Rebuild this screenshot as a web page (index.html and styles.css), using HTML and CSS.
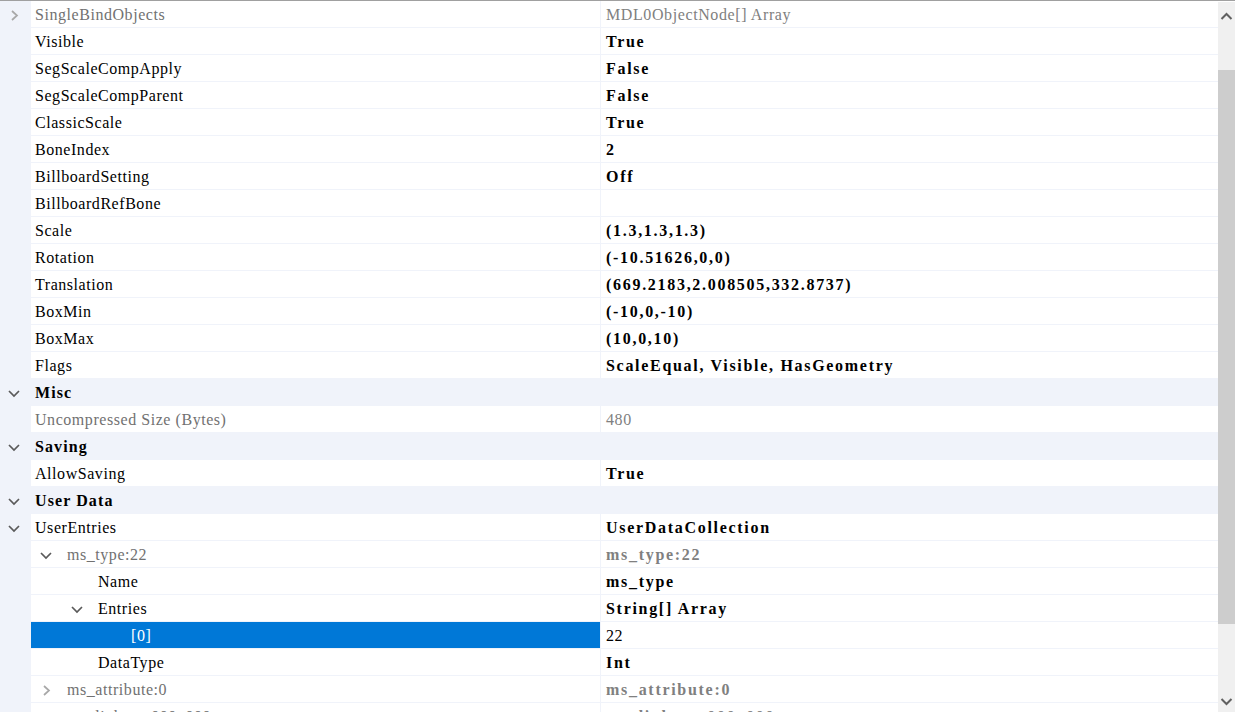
FILE: index.html
```html
<!DOCTYPE html>
<html>
<head>
<meta charset="utf-8">
<link rel="stylesheet" href="styles.css">
</head>
<body>
<div class="grid-view">
  <div class="list">
    <div class="row"><div class="gut"><svg class="tw" viewBox="0 0 14 14"><polyline class="cr" points="5,3 10,7.5 5,12"/></svg></div><div class="lab ro">SingleBindObjects</div><div class="val ro">MDL0ObjectNode[] Array</div></div>
    <div class="row"><div class="gut"></div><div class="lab">Visible</div><div class="val b">True</div></div>
    <div class="row"><div class="gut"></div><div class="lab">SegScaleCompApply</div><div class="val b">False</div></div>
    <div class="row"><div class="gut"></div><div class="lab">SegScaleCompParent</div><div class="val b">False</div></div>
    <div class="row"><div class="gut"></div><div class="lab">ClassicScale</div><div class="val b">True</div></div>
    <div class="row"><div class="gut"></div><div class="lab">BoneIndex</div><div class="val b">2</div></div>
    <div class="row"><div class="gut"></div><div class="lab">BillboardSetting</div><div class="val b">Off</div></div>
    <div class="row"><div class="gut"></div><div class="lab">BillboardRefBone</div><div class="val b"></div></div>
    <div class="row"><div class="gut"></div><div class="lab">Scale</div><div class="val b">(1.3,1.3,1.3)</div></div>
    <div class="row"><div class="gut"></div><div class="lab">Rotation</div><div class="val b">(-10.51626,0,0)</div></div>
    <div class="row"><div class="gut"></div><div class="lab">Translation</div><div class="val b">(669.2183,2.008505,332.8737)</div></div>
    <div class="row"><div class="gut"></div><div class="lab">BoxMin</div><div class="val b">(-10,0,-10)</div></div>
    <div class="row"><div class="gut"></div><div class="lab">BoxMax</div><div class="val b">(10,0,10)</div></div>
    <div class="row"><div class="gut"></div><div class="lab">Flags</div><div class="val b">ScaleEqual, Visible, HasGeometry</div></div>
    <div class="row cat"><div class="gut"><svg class="tw" viewBox="0 0 14 14"><polyline class="cd" points="2,5 7,10 12,5"/></svg></div><div class="catlab">Misc</div></div>
    <div class="row"><div class="gut"></div><div class="lab ro">Uncompressed Size (Bytes)</div><div class="val ro">480</div></div>
    <div class="row cat"><div class="gut"><svg class="tw" viewBox="0 0 14 14"><polyline class="cd" points="2,5 7,10 12,5"/></svg></div><div class="catlab">Saving</div></div>
    <div class="row"><div class="gut"></div><div class="lab">AllowSaving</div><div class="val b">True</div></div>
    <div class="row cat"><div class="gut"><svg class="tw" viewBox="0 0 14 14"><polyline class="cd" points="2,5 7,10 12,5"/></svg></div><div class="catlab">User Data</div></div>
    <div class="row"><div class="gut"><svg class="tw" viewBox="0 0 14 14"><polyline class="cd" points="2,5 7,10 12,5"/></svg></div><div class="lab">UserEntries</div><div class="val b">UserDataCollection</div></div>
    <div class="row"><div class="gut"></div><div class="lab ro in1"><svg class="tw" viewBox="0 0 14 14"><polyline class="cd" points="2,5 7,10 12,5"/></svg>ms_type:22</div><div class="val b ro">ms_type:22</div></div>
    <div class="row"><div class="gut"></div><div class="lab in2">Name</div><div class="val b">ms_type</div></div>
    <div class="row"><div class="gut"></div><div class="lab in2t"><svg class="tw" viewBox="0 0 14 14"><polyline class="cd" points="2,5 7,10 12,5"/></svg>Entries</div><div class="val b">String[] Array</div></div>
    <div class="row sel"><div class="gut"></div><div class="lab in3">[0]</div><div class="val">22</div></div>
    <div class="row"><div class="gut"></div><div class="lab in2">DataType</div><div class="val b">Int</div></div>
    <div class="row"><div class="gut"></div><div class="lab ro in1"><svg class="tw" viewBox="0 0 14 14"><polyline class="cr" points="5,3 10,7.5 5,12"/></svg>ms_attribute:0</div><div class="val b ro">ms_attribute:0</div></div>
    <div class="row"><div class="gut"></div><div class="lab ro in1"><svg class="tw" viewBox="0 0 14 14"><polyline class="cr" points="5,3 10,7.5 5,12"/></svg>ms_linkage:000_000</div><div class="val b ro">ms_linkage:000_000</div></div>
  </div>
  <div class="vscroll">
    <div class="sbtn up"><svg viewBox="0 0 17 17"><polyline points="3.5,11 8.5,6 13.5,11"/></svg></div>
    <div class="track"><div class="thumb"></div></div>
    <div class="sbtn down"><svg viewBox="0 0 17 17"><polyline points="3.5,6 8.5,11 13.5,6"/></svg></div>
  </div>
</div>
</body>
</html>
```
FILE: styles.css
```css
html, body {
  margin: 0;
  padding: 0;
  background: #ffffff;
}
body {
  font-family: "Liberation Serif", "Times New Roman", serif;
  font-size: 16px;
  color: #000000;
}
.grid-view {
  display: flex;
  width: 1235px;
  height: 712px;
  overflow: hidden;
  border-top: 1px solid #a0a0a0;
  box-sizing: border-box;
}
.list {
  flex: 1;
  display: flex;
  flex-direction: column;
  min-width: 0;
}
.row {
  display: grid;
  grid-template-columns: 31px 569px 1fr;
  height: 27px;
  flex: none;
}
.row > div {
  box-sizing: border-box;
  border-bottom: 1px solid #f0f3fa;
  display: flex;
  align-items: center;
  white-space: nowrap;
  overflow: hidden;
  padding-top: 1px;
}
.gut {
  background: #f0f3fa;
  padding-left: 7px;
}
.lab {
  padding-left: 4px;
  letter-spacing: 0.55px;
}
.val {
  border-left: 1px solid #f0f3fa;
  padding-left: 5px;
  letter-spacing: 0.6px;
}
.val.b {
  font-weight: bold;
  letter-spacing: 1.7px;
}
.ro {
  color: #717171;
}
.val.ro {
  color: #808080;
}
.cat {
  background: #f0f3fa;
}
.catlab {
  grid-column: 2 / 4;
  padding-left: 4px;
  font-weight: bold;
  letter-spacing: 1.1px;
}
.in1 { padding-left: 8px; }
.in2 { padding-left: 67px; }
.in2t { padding-left: 39px; }
.in3 { padding-left: 100px; }
.tw {
  width: 14px;
  height: 14px;
  flex: none;
}
.lab .tw {
  margin-right: 14px;
}
.tw polyline {
  fill: none;
  stroke-width: 1.7;
  stroke-linecap: butt;
  stroke-linejoin: miter;
}
.cd { stroke: #5a5a5a; }
.cr { stroke: #a8a8a8; stroke-width: 1.5; }
.sel .lab {
  background: #0078d7;
  color: #ffffff;
}
.vscroll {
  width: 17px;
  flex: none;
  display: flex;
  flex-direction: column;
  background: #f0f0f0;
  margin-top: 1px;
}
.sbtn {
  flex: none;
  display: flex;
  align-items: center;
}
.sbtn.up {
  height: 28px;
}
.sbtn.down {
  height: 22px;
}
.sbtn svg {
  width: 17px;
  height: 17px;
  display: block;
}
.sbtn polyline {
  fill: none;
  stroke: #606060;
  stroke-width: 2;
}
.track {
  flex: 1;
}
.thumb {
  margin-top: 40px;
  height: 554px;
  background: #cdcdcd;
}
```
